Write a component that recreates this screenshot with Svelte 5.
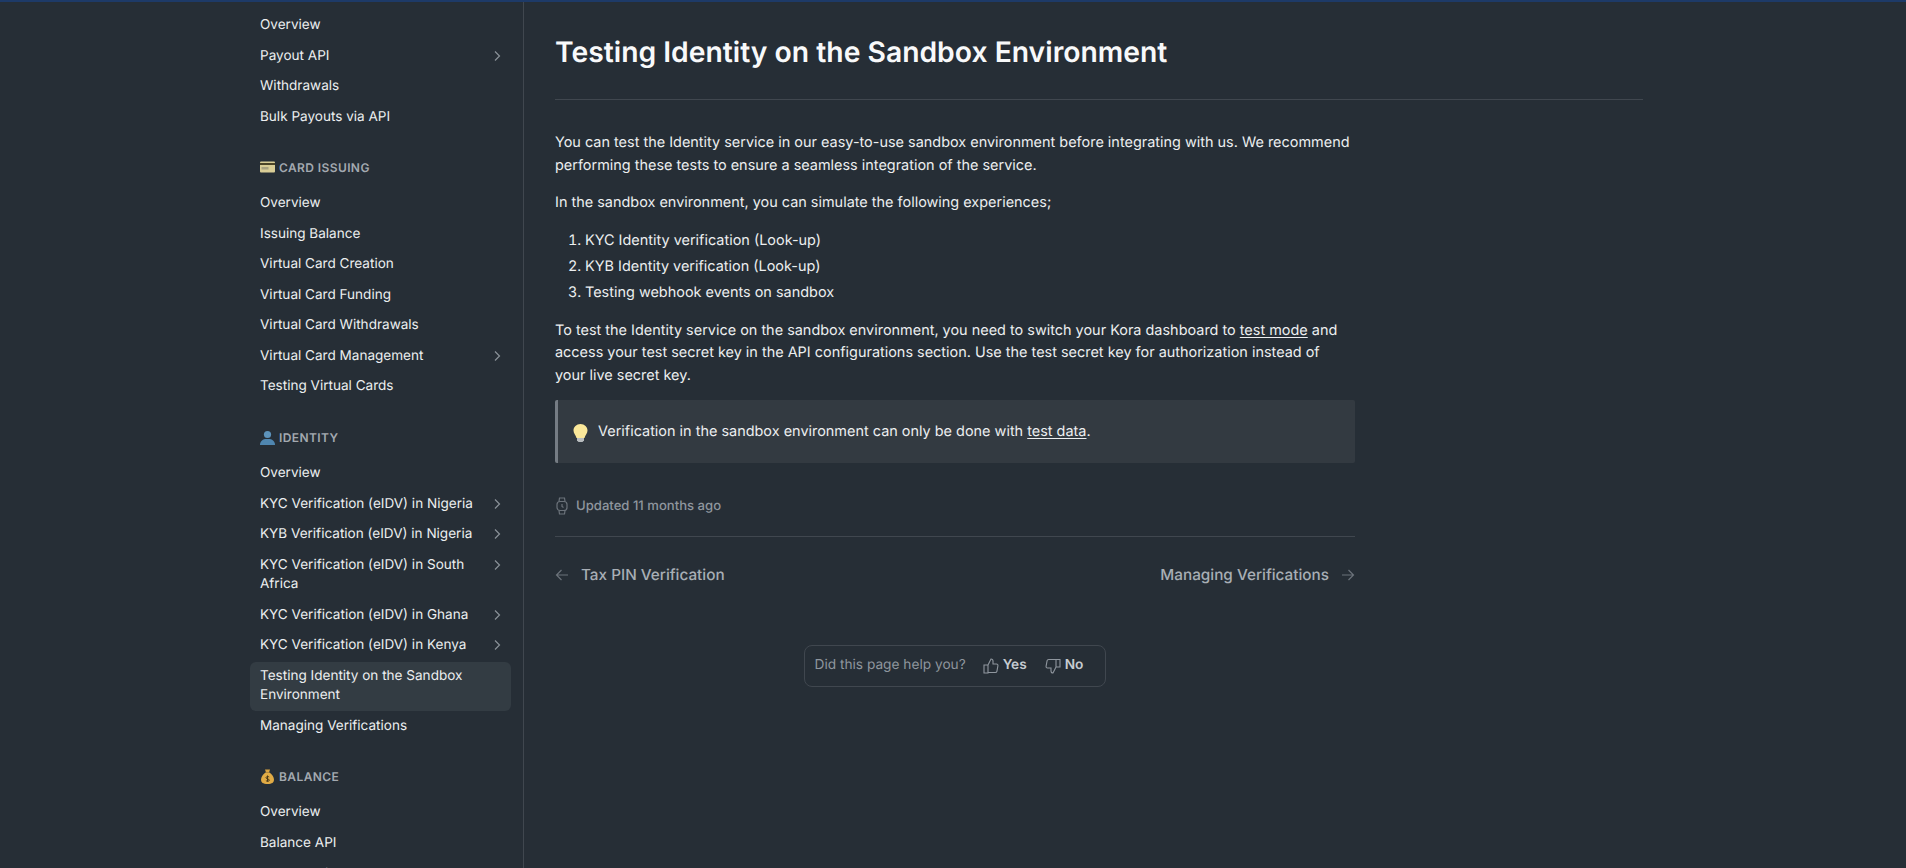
<script>
  const sections = [
    {
      items: [
        { label: "Overview" },
        { label: "Payout API", more: true },
        { label: "Withdrawals" },
        { label: "Bulk Payouts via API" },
      ],
    },
    {
      title: "CARD ISSUING",
      icon: "card",
      items: [
        { label: "Overview" },
        { label: "Issuing Balance" },
        { label: "Virtual Card Creation" },
        { label: "Virtual Card Funding" },
        { label: "Virtual Card Withdrawals" },
        { label: "Virtual Card Management", more: true },
        { label: "Testing Virtual Cards" },
      ],
    },
    {
      title: "IDENTITY",
      icon: "person",
      items: [
        { label: "Overview" },
        { label: "KYC Verification (eIDV) in Nigeria", more: true },
        { label: "KYB Verification (eIDV) in Nigeria", more: true },
        { label: "KYC Verification (eIDV) in South Africa", more: true },
        { label: "KYC Verification (eIDV) in Ghana", more: true },
        { label: "KYC Verification (eIDV) in Kenya", more: true },
        { label: "Testing Identity on the Sandbox Environment", active: true },
        { label: "Managing Verifications" },
      ],
    },
    {
      title: "BALANCE",
      icon: "bag",
      items: [
        { label: "Overview" },
        { label: "Balance API" },
        { label: "Balance History" },
      ],
    },
  ];
</script>

<div class="page">
  <aside class="sidebar">
    {#each sections as section}
      <section class="group">
        {#if section.title}
          <h5>
            {#if section.icon === "card"}
              <svg width="15" height="12" viewBox="0 0 15 12">
                <rect y="0.5" width="15" height="11" rx="1" fill="#d9cd96" />
                <rect y="2" width="15" height="2" fill="#4b4427" />
                <rect x="1.5" y="6" width="7" height="2.5" fill="#a9a27f" />
              </svg>
            {:else if section.icon === "person"}
              <svg width="15" height="15" viewBox="0 0 15 15">
                <circle cx="7.5" cy="4.5" r="3.6" fill="#5d93bb" />
                <path d="M0 15c0-4 3-5.500 5-6h5c2 .5 5 2 5 6z" fill="#4f86b0" />
              </svg>
            {:else if section.icon === "bag"}
              <svg width="15" height="15" viewBox="-1 0 15 15">
                <path d="M4 0.500h5l-1 3h-3z" fill="#d9a441" />
                <path d="M4.500 3.500h4c2.500 2 4.500 4.500 4.500 7 0 3-2 4.500-6.500 4.500S0 13.500 0 10.500c0-2.500 2-5 4.500-7z" fill="#e0ab45" />
                <path d="M6.500 6.500v6M8.200 8c-1-.8-3.200-.6-3.200.7 0 1.600 3.400.9 3.400 2.500 0 1.200-2.400 1.400-3.500.5" stroke="#4c3a17" stroke-width="1" fill="none" />
              </svg>
            {/if}
            <span>{section.title}</span>
          </h5>
        {/if}
        <ul>
          {#each section.items as item}
            <li class="item" class:active={item.active}>
              <span class="label">{item.label}</span>
              {#if item.more}
                <svg class="chevron" width="12" height="12" viewBox="0 0 12 12" fill="none">
                  <path d="M4 1.500 8.500 6 4 10.500" stroke="currentColor" stroke-width="1.200" />
                </svg>
              {/if}
            </li>
          {/each}
        </ul>
      </section>
    {/each}
  </aside>

  <main class="content">
    <header>
      <h1>Testing Identity on the Sandbox Environment</h1>
    </header>

    <article>
      <p>You can test the Identity service in our easy-to-use sandbox environment before integrating with us. We recommend performing these tests to ensure a seamless integration of the service.</p>
      <p>In the sandbox environment, you can simulate the following experiences;</p>
      <ol>
        <li>KYC Identity verification (Look-up)</li>
        <li>KYB Identity verification (Look-up)</li>
        <li>Testing webhook events on sandbox</li>
      </ol>
      <p>To test the Identity service on the sandbox environment, you need to switch your Kora dashboard to <u>test mode</u> and access your test secret key in the API configurations section. Use the test secret key for authorization instead of your live secret key.</p>

      <div class="callout">
        <svg width="15" height="18" viewBox="0 0 15 18">
          <path d="M7.500 0C3.400 0 .5 3 .5 6.500c0 3 2.300 4.300 3 7.500h8c.7-3.200 3-4.500 3-7.500C14.500 3 11.600 0 7.500 0z" fill="#fbe89a" />
          <path d="M4 14h7v2.500l-1.500 1.500h-4L4 16.500z" fill="#b8bcbe" />
        </svg>
        <span>Verification in the sandbox environment can only be done with <u>test data</u>.</span>
      </div>

      <div class="updated">
        <svg width="14" height="18" viewBox="0 0 14 18" fill="none" stroke="currentColor" stroke-width="1.200">
          <rect x="2" y="4.500" width="10" height="9" rx="3" />
          <path d="M4 4.500 4.500 1h5l.5 3.500M4 13.500 4.500 17h5l.5-3.500M7 7v2.500l1.500 1" />
        </svg>
        <span>Updated 11 months ago</span>
      </div>

      <nav class="pager">
        <div class="link">
          <svg width="14" height="14" viewBox="0 0 14 14" fill="none" stroke="currentColor" stroke-width="1.200">
            <path d="M13 7H1.500M6.500 2 1.500 7l5 5" />
          </svg>
          <span>Tax PIN Verification</span>
        </div>
        <div class="link">
          <span>Managing Verifications</span>
          <svg width="14" height="14" viewBox="0 0 14 14" fill="none" stroke="currentColor" stroke-width="1.200">
            <path d="M1 7h11.500M7.500 2l5 5-5 5" />
          </svg>
        </div>
      </nav>

      <div class="feedback-row">
        <div class="feedback">
          <span class="question">Did this page help you?</span>
          <span class="vote yes">
            <svg width="16" height="16" viewBox="0 0 16 16" fill="none" stroke="currentColor" stroke-width="1.100">
              <path d="M5 7 8 1c1.300 0 2 .8 2 2v3h3.500c1 0 1.600.8 1.400 1.800l-1 5.500c-.2.900-.8 1.200-1.600 1.200H5zM1 7h4v8H1z" />
            </svg>
            Yes
          </span>
          <span class="vote">
            <svg width="16" height="16" viewBox="0 0 16 16" fill="none" stroke="currentColor" stroke-width="1.100">
              <path d="M11 9 8 15c-1.300 0-2-.8-2-2v-3H2.500c-1 0-1.600-.8-1.400-1.800l1-5.500C2.300 1.800 2.900 1.500 3.700 1.500H11zM15 9h-4V1.500h4z" />
            </svg>
            No
          </span>
        </div>
      </div>
    </article>
  </main>
</div>

<style>
  :global(body) {
    margin: 0;
    background: #262e36;
    font-family: Inter, "Noto Sans", sans-serif;
    color: #f0f2f4;
    text-rendering: geometricPrecision;
  }

  .page {
    display: flex;
    height: 868px;
    overflow: hidden;
    border-top: 2px solid #1d3a68;
    box-sizing: border-box;
  }

  .sidebar {
    width: 524px;
    flex: none;
    box-sizing: border-box;
    padding: 9px 12px 0 250px;
    border-right: 1px solid #40474f;
    overflow: hidden;
  }

  .group {
    margin-bottom: 25px;
  }

  h5 {
    display: flex;
    align-items: center;
    gap: 4px;
    margin: 0 0 12px 10px;
    height: 20px;
    font-size: 12px;
    font-weight: 600;
    letter-spacing: 0.4px;
    color: #a3a9b0;
  }

  ul {
    list-style: none;
    margin: 0;
    padding: 0;
    display: flex;
    flex-direction: column;
    gap: 1px;
  }

  .item {
    display: flex;
    justify-content: space-between;
    align-items: flex-start;
    padding: 5px 10px;
    border-radius: 6px;
    font-size: 13.550px;
    line-height: 19.550px;
    color: #eceef0;
  }

  .item.active {
    background: #333c43;
  }

  .label {
    max-width: 220px;
  }

  .chevron {
    margin: 3px -2px 0 0;
    color: #8b9299;
  }

  .content {
    flex: 1;
    padding: 0 31px;
    min-width: 0;
  }

  header {
    width: 1088px;
    padding: 32px 0 29px;
    border-bottom: 1px solid #40474f;
  }

  h1 {
    margin: 0;
    font-size: 28.300px;
    line-height: 36px;
    font-weight: 600;
    color: #f8f9fa;
  }

  article {
    width: 800px;
    padding-top: 32px;
    font-size: 14.450px;
    line-height: 22.500px;
    color: #eceef0;
  }

  p {
    margin: 0 0 15px;
    max-width: 797px;
  }

  ol {
    margin: 0 0 15.500px;
    padding-left: 30px;
  }

  ol li {
    margin-bottom: 3.500px;
  }

  u {
    text-underline-offset: 2px;
  }

  .callout {
    display: flex;
    align-items: center;
    gap: 10px;
    height: 63px;
    box-sizing: border-box;
    padding: 3px 15px 0;
    background: #333a41;
    border-left: 3px solid #757c84;
    border-radius: 2px;
    margin-top: -2.500px;
  }

  .updated {
    display: flex;
    align-items: center;
    gap: 7px;
    margin-top: 32px;
    font-size: 13.100px;
    font-weight: 500;
    color: #8f969e;
  }

  .updated svg {
    color: #6b727a;
  }

  .pager {
    display: flex;
    justify-content: space-between;
    margin-top: 19px;
    padding-top: 27px;
    border-top: 1px solid #40474f;
    font-size: 15.300px;
    font-weight: 500;
    color: #a8aeb5;
  }

  .link {
    display: flex;
    align-items: center;
    gap: 12px;
  }

  .link svg {
    color: #6b727a;
  }

  .feedback-row {
    display: flex;
    justify-content: center;
    margin-top: 58px;
  }

  .feedback {
    display: flex;
    align-items: center;
    gap: 17px;
    height: 42px;
    box-sizing: border-box;
    padding: 0 22px 0 10px;
    border: 1px solid #40474f;
    border-radius: 8px;
    font-size: 13.700px;
  }

  .question {
    color: #8f969e;
  }

  .vote {
    display: flex;
    align-items: center;
    gap: 4px;
    font-weight: 600;
    color: #c7ccd1;
  }

  .vote.yes {
    margin-right: 1px;
  }

  .vote svg {
    color: #8f969e;
  }
</style>
